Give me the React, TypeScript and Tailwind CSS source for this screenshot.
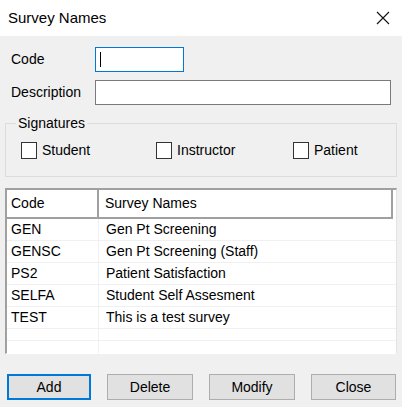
import { useState } from 'react';

const surveys = [
  { code: 'GEN', name: 'Gen Pt Screening' },
  { code: 'GENSC', name: 'Gen Pt Screening (Staff)' },
  { code: 'PS2', name: 'Patient Satisfaction' },
  { code: 'SELFA', name: 'Student Self Assesment' },
  { code: 'TEST', name: 'This is a test survey' },
];

function Check({ label, checked, onToggle }: { label: string; checked: boolean; onToggle: () => void }) {
  return (
    <button type="button" onClick={onToggle} className="flex items-center gap-[5px]">
      <span className="flex h-[17px] w-[16px] items-center justify-center border border-[#333333] bg-white">
        {checked && (
          <svg width="11" height="11" viewBox="0 0 11 11">
            <path d="M1.5 5.5 L4.5 8.5 L9.5 2" fill="none" stroke="#000" strokeWidth="1.4" />
          </svg>
        )}
      </span>
      <span className="text-[14px] leading-none">{label}</span>
    </button>
  );
}

export default function App() {
  const [sig, setSig] = useState({ student: false, instructor: false, patient: false });

  return (
    <div className="h-[407px] w-[402px] overflow-hidden bg-[#f0f0f0] font-['Liberation_Sans',Arial,sans-serif] text-black">
      {/* title bar */}
      <div className="flex h-[36px] items-center justify-between bg-white pl-[8px] pr-[12px]">
        <span className="text-[15px]">Survey Names</span>
        <svg width="14" height="14" viewBox="0 0 14 14">
          <path d="M1 1 L13 13 M13 1 L1 13" stroke="#111" strokeWidth="1.1" />
        </svg>
      </div>

      {/* fields */}
      <div className="flex flex-col gap-[8px] pl-[11px] pt-[11px] text-[14px]">
        <div className="flex h-[25px] items-center">
          <span className="w-[84px]">Code</span>
          <div className="flex h-[25px] w-[89px] items-center border border-[#0078d7] bg-white pl-[4px]">
            <span className="h-[15px] w-px bg-black" />
          </div>
        </div>
        <div className="flex h-[25px] items-center">
          <span className="w-[84px]">Description</span>
          <div className="h-[25px] w-[296px] border border-[#7a7a7a] bg-white" />
        </div>
      </div>

      {/* signatures group */}
      <fieldset className="mx-[5px] mt-[10px] border border-[#dcdcdc] pb-[17px]">
        <legend className="ml-[10px] px-[2px] text-[14px] leading-[16px]">Signatures</legend>
        <div className="mt-[10px] flex h-[18px] items-center pl-[15px]">
          <div className="w-[135px]">
            <Check label="Student" checked={sig.student} onToggle={() => setSig({ ...sig, student: !sig.student })} />
          </div>
          <div className="w-[137px]">
            <Check label="Instructor" checked={sig.instructor} onToggle={() => setSig({ ...sig, instructor: !sig.instructor })} />
          </div>
          <Check label="Patient" checked={sig.patient} onToggle={() => setSig({ ...sig, patient: !sig.patient })} />
        </div>
      </fieldset>

      {/* list */}
      <div className="mx-[5px] mt-[11px] h-[166px] overflow-hidden border-t-2 border-l-2 border-r border-b border-t-[#a0a0a0] border-l-[#a0a0a0] border-r-[#e3e3e3] border-b-[#ffffff] bg-white text-[14px]">
        <div className="flex h-[29px] pr-[3px]">
          <div className="flex w-[92px] items-center border-r-2 border-b-2 border-[#a0a0a0] pl-[4px]">Code</div>
          <div className="flex flex-1 items-center border-r-2 border-b-2 border-[#a0a0a0] pl-[6px]">Survey Names</div>
        </div>
        {surveys.map((s) => (
          <div key={s.code} className="flex h-[22px] border-b border-[#f0f0f0]">
            <div className="flex w-[92px] items-center border-r border-[#f0f0f0] pl-[4px]">{s.code}</div>
            <div className="flex flex-1 items-center pl-[7px]">{s.name}</div>
          </div>
        ))}
        <div className="flex h-[12px] border-b border-[#f0f0f0]">
          <div className="w-[92px] border-r border-[#f0f0f0]" />
        </div>
        <div className="flex h-[16px]">
          <div className="w-[92px] border-r border-[#f0f0f0]" />
        </div>
      </div>

      {/* buttons */}
      <div className="mt-[20px] flex gap-[16px] pl-[7px] text-[14px]">
        <button className="h-[26px] w-[84px] border-2 border-[#0078d7] bg-[#e1e1e1]">Add</button>
        <button className="h-[26px] w-[86px] border border-[#adadad] bg-[#e1e1e1]">Delete</button>
        <button className="h-[26px] w-[86px] border border-[#adadad] bg-[#e1e1e1]">Modify</button>
        <button className="h-[26px] w-[85px] border border-[#adadad] bg-[#e1e1e1]">Close</button>
      </div>
    </div>
  );
}
